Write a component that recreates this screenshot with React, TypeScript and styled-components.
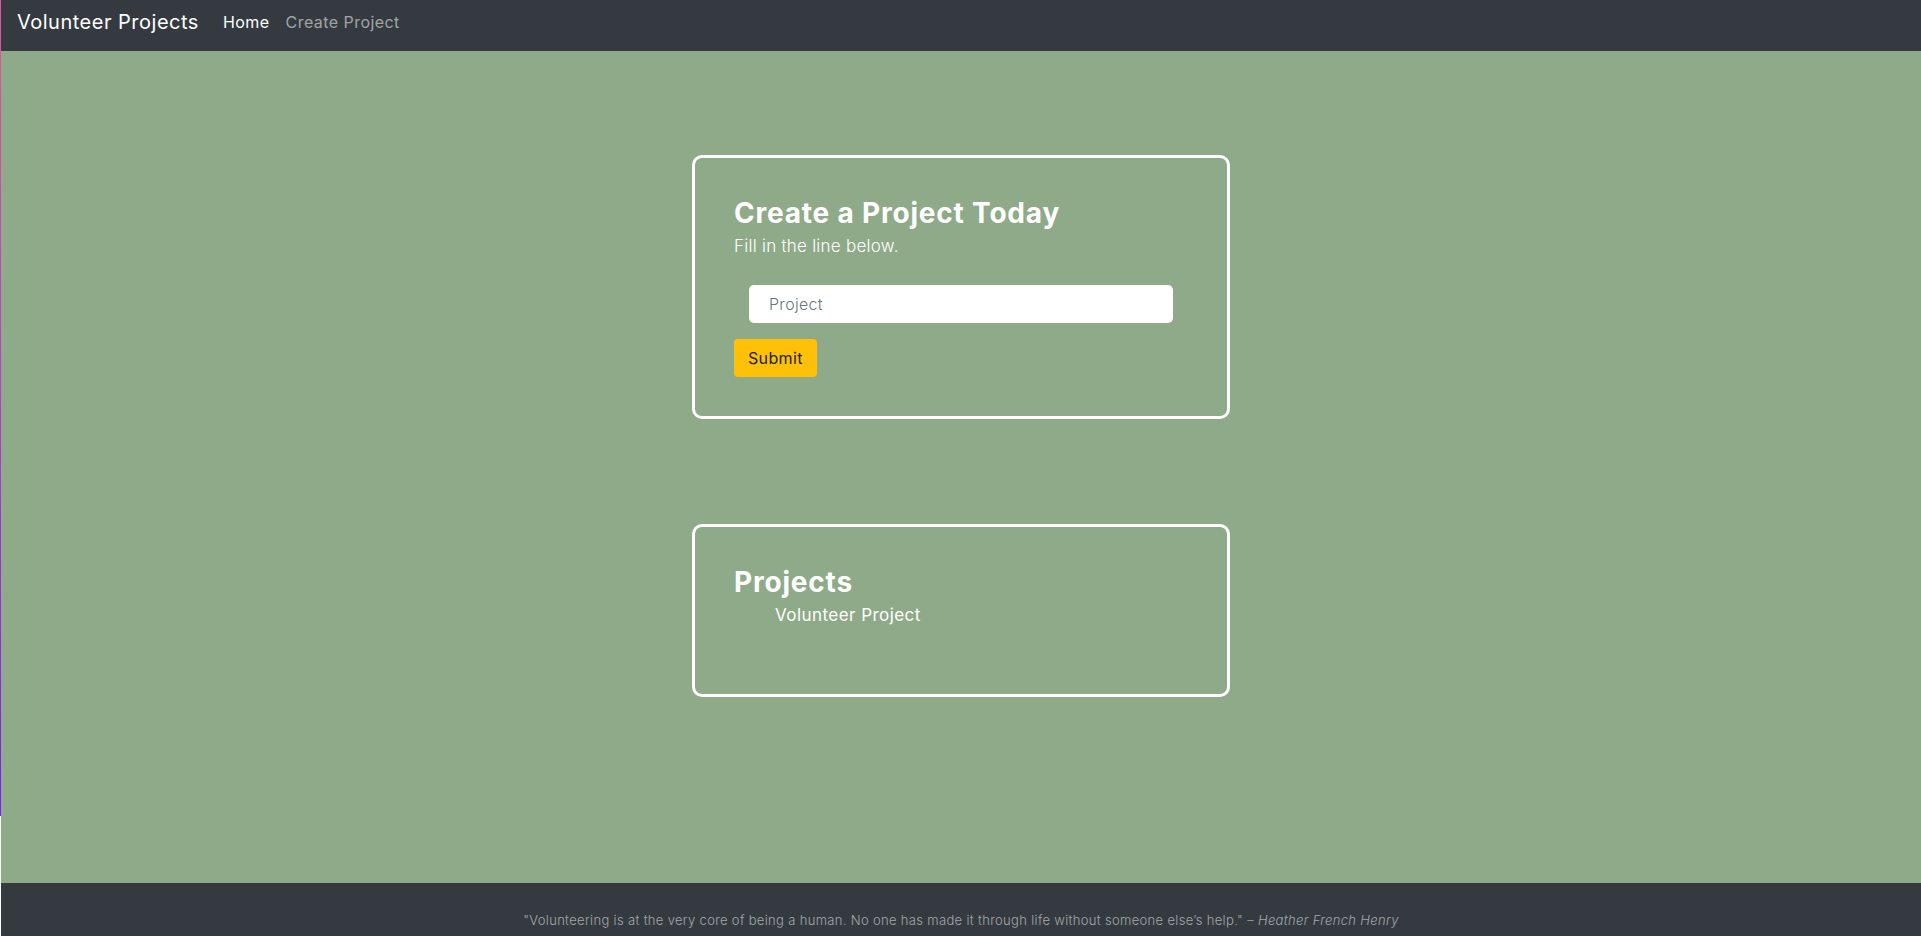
import React from "react";
import styled, { createGlobalStyle } from "styled-components";

const FONT = `"Inter", "Open Sans", sans-serif`;

const GlobalStyle = createGlobalStyle`
  html, body {
    margin: 0;
    padding: 0;
    background: #ffffff;
    overflow: hidden;
  }
  * { box-sizing: border-box; }
`;

const Page = styled.div`
  display: flex;
  align-items: flex-start;
  min-height: 100vh;
  font-family: ${FONT};
`;

const EdgeStrip = styled.div`
  width: 1px;
  height: 816px;
  flex-shrink: 0;
  background: linear-gradient(180deg, #e0579b 0%, #b33fc8 50%, #7a1dff 100%);
`;

const Shell = styled.div`
  flex: 1;
  display: flex;
  flex-direction: column;
  min-height: 100vh;
`;

const NavBar = styled.nav`
  height: 51px;
  background: #343a40;
  display: flex;
  align-items: center;
  padding: 0 16px 7px;
`;

const Brand = styled.a`
  font-size: 20px;
  color: #ffffff;
  text-decoration: none;
  margin-right: 24px;
  letter-spacing: 0.5px;
`;

const NavLinks = styled.div`
  display: flex;
  gap: 16px;
`;

const NavLink = styled.a<{ $active?: boolean }>`
  font-size: 16px;
  letter-spacing: 0.45px;
  color: ${(p) => (p.$active ? "#ffffff" : "rgba(255,255,255,0.55)")};
  text-decoration: none;
`;

const Main = styled.main`
  flex: 1;
  background: #8faa88;
  display: flex;
  flex-direction: column;
  align-items: center;
  padding-top: 104px;
  gap: 105px;
`;

const Card = styled.section<{ $minHeight: number }>`
  width: 538px;
  min-height: ${(p) => p.$minHeight}px;
  border: 3px solid #ffffff;
  border-radius: 10px;
  padding: 39px 39px;
  color: #ffffff;
`;

const Title = styled.h3`
  margin: 0;
  font-size: 28px;
  font-weight: 700;
  line-height: 1.2;
  letter-spacing: 0.8px;
`;

const Subtitle = styled.p`
  margin: 3px 0 0;
  font-size: 17px;
  font-weight: 300;
  line-height: 1.5;
  letter-spacing: 0.25px;
`;

const FormRow = styled.div`
  padding: 0 15px;
  margin-top: 26px;
`;

const TextInput = styled.input`
  width: 100%;
  height: 38px;
  border: none;
  border-radius: 5px;
  padding: 0 20px;
  font-family: ${FONT};
  font-size: 16px;
  letter-spacing: 0.3px;
  color: #495057;
  background: #ffffff;
  outline: none;
  &::placeholder {
    color: #6c757d;
    font-weight: 300;
  }
`;

const SubmitButton = styled.button`
  margin-top: 16px;
  height: 38px;
  padding: 0 14px;
  border: none;
  border-radius: 4px;
  background: #ffc107;
  color: #212529;
  font-family: ${FONT};
  font-size: 16px;
  letter-spacing: 0.35px;
  cursor: pointer;
`;

const ProjectList = styled.ul`
  margin: 3px 0 0;
  padding-left: 41px;
  list-style: none;
`;

const ProjectItem = styled.li`
  font-size: 17px;
  font-weight: 400;
  line-height: 1.5;
  letter-spacing: 0.45px;
`;

const Footer = styled.footer`
  height: 53px;
  background: #343a40;
  display: flex;
  align-items: flex-end;
  justify-content: center;
  padding-bottom: 6px;
`;

const Quote = styled.p`
  margin: 0;
  font-size: 13px;
  font-weight: 300;
  color: #a4a7aa;
  line-height: 1.5;
  letter-spacing: 0.33px;
`;

const Author = styled.em`
  font-style: italic;
`;

export default function App() {
  return (
    <>
      <GlobalStyle />
      <Page>
        <EdgeStrip />
        <Shell>
          <NavBar>
            <Brand href="#">Volunteer Projects</Brand>
            <NavLinks>
              <NavLink $active href="#">Home</NavLink>
              <NavLink href="#">Create Project</NavLink>
            </NavLinks>
          </NavBar>
          <Main>
            <Card $minHeight={264}>
              <Title>Create a Project Today</Title>
              <Subtitle>Fill in the line below.</Subtitle>
              <FormRow>
                <TextInput placeholder="Project" />
              </FormRow>
              <SubmitButton type="button">Submit</SubmitButton>
            </Card>
            <Card $minHeight={173}>
              <Title>Projects</Title>
              <ProjectList>
                <ProjectItem>Volunteer Project</ProjectItem>
              </ProjectList>
            </Card>
          </Main>
          <Footer>
            <Quote>
              "Volunteering is at the very core of being a human. No one has made it through life without
              someone else’s help." <Author>– Heather French Henry</Author>
            </Quote>
          </Footer>
        </Shell>
      </Page>
    </>
  );
}
